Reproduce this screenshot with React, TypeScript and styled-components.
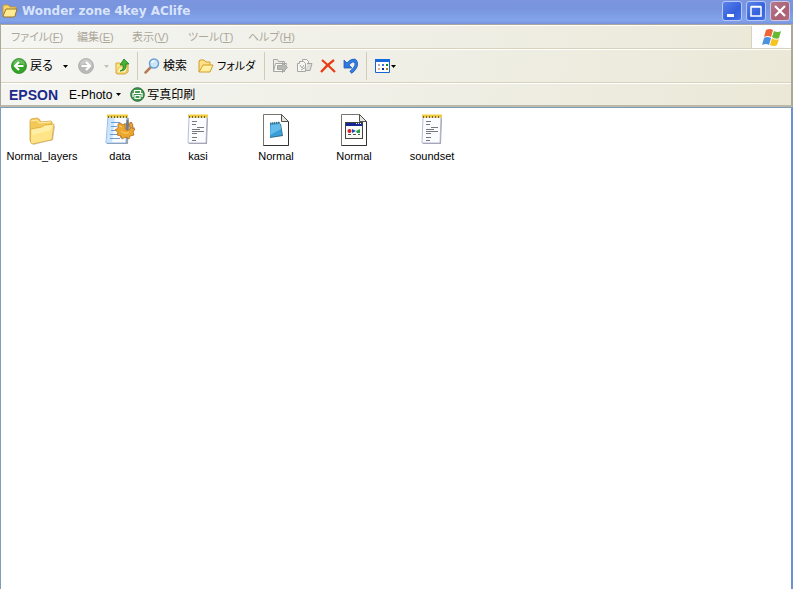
import React from 'react';
import styled, { createGlobalStyle } from 'styled-components';

const GlobalStyle = createGlobalStyle`
  * { box-sizing: border-box; }
  html, body, #root { height: 100%; margin: 0; }
  body {
    background: #fff;
    color: #000;
    font: 11px/16px "Liberation Sans", "Noto Sans CJK JP", sans-serif;
    font-feature-settings: "palt";
    overflow: hidden;
  }
  button { font: inherit; font-feature-settings: inherit; color: inherit; background: none; border: 0; padding: 0; white-space: nowrap; }
  svg { display: block; flex: none; }
`;

const Window = styled.main`
  display: flex;
  flex-direction: column;
  min-height: 100%;
`;

const TitleBar = styled.header`
  display: flex;
  align-items: center;
  gap: 4px;
  height: 24px;
  padding: 0 3px 0 2px;
  color: #d9e4fb;
  background: linear-gradient(#7b96de 0, #7894de 35%, #7d9ce4 60%, #82a4e9 85%, #7a91dc 100%);
`;

const TitleIcon = styled.span`
  padding-bottom: 3px;
`;

const Title = styled.h1`
  flex: 1;
  margin: 0;
  font: bold 12px/16px "DejaVu Sans", sans-serif;
  padding-bottom: 2px;
  white-space: nowrap;
`;

const Captions = styled.div`
  display: flex;
  gap: 4px;
  padding-bottom: 3px;
`;

const CaptionButton = styled.button<{ $close?: boolean }>`
  display: grid;
  place-items: center;
  width: 20px;
  height: 20px;
  border: 1px solid ${p => (p.$close ? '#d3c6e0' : '#b6c8f6')};
  border-radius: 3px;
  background: ${p => (p.$close
    ? 'linear-gradient(135deg, #b6798e, #aa6174 60%, #b26a80)'
    : 'linear-gradient(135deg, #5a82e8, #3561dd 60%, #4473e9)')};
`;

const Bars = styled.div`
  border: solid #aca899;
  border-width: 1px 2px 2px 1px;
  border-bottom-color: #bdb9a8;
  background: linear-gradient(100deg, #f5f5f2, #f0f0e8 45%, #ebe8d7);
`;

const Bar = styled.div<{ $height: number }>`
  display: flex;
  align-items: center;
  height: ${p => p.$height}px;
  border-top: 1px solid #fff;
  border-bottom: 1px solid #d8d2bd;
  &:last-child { border-bottom: 0; }
`;

const MenuList = styled.nav`
  display: flex;
  flex: 1;
  gap: 16px;
  padding-left: 10px;
  color: #aca899;
`;

const MenuButton = styled.button<{ $width: number }>`
  width: ${p => p.$width}px;
  text-align: left;
`;

const Throbber = styled.div`
  display: grid;
  place-items: center;
  align-self: stretch;
  width: 40px;
  border-left: 1px solid #d8d2bd;
  background: #fff;
`;

const Group = styled.div<{ $width: number; $gap: number; $start: number }>`
  display: flex;
  align-items: center;
  gap: ${p => p.$gap}px;
  width: ${p => p.$width}px;
  height: 28px;
  padding-left: ${p => p.$start}px;
  border-right: 1px solid #d0ccb9;
  &:last-child { border-right: 0; }
`;

const Tool = styled.button<{ $gap?: number; $large?: boolean }>`
  display: flex;
  align-items: center;
  gap: ${p => p.$gap ?? 3}px;
  font-size: ${p => (p.$large ? 12 : 11)}px;
`;

const LinkBar = styled.div`
  display: flex;
  align-items: center;
  gap: 8px;
  padding-left: 8px;
`;

const Brand = styled.strong`
  width: 52px;
  color: #1b2a8c;
  font: bold 14px/18px "Liberation Sans", sans-serif;
`;

const Content = styled.section`
  flex: 1;
  border: solid #7f9db9;
  border-width: 1px 1px 0;
  border-right: 2px solid #6f8fd3;
  background: #fff;
`;

const FileGrid = styled.ul`
  display: grid;
  grid-template-columns: repeat(auto-fill, 78px);
  gap: 16px 0;
  margin: 0;
  padding: 6px 2px;
  list-style: none;
`;

const FileButton = styled.button`
  display: flex;
  flex-direction: column;
  align-items: center;
  gap: 2px;
  width: 100%;
`;

const FolderIcon = () => (
  <svg width="32" height="32" viewBox="0 0 32 32">
    <path d="M6 12L29 12l-2 14L7 31z" fill="#8c8471" opacity=".45" />
    <path d="M4 27V7l1-2 6-1 2 1 2 3 10-1 1 1v18z" fill="#f3c856" stroke="#d3a443" strokeWidth=".8" />
    <path d="M5 7l6-1 2 3 12-1" fill="none" stroke="#fff2ae" />
    <path d="M4.500 28V15l11-2 3-2 9.500-1-2 15-1 1-19 4z" fill="#ffe588" stroke="#d9ab43" strokeWidth=".8" />
    <path d="M6 16l10-2 3-2 7-1-1 5L6 21z" fill="#fff5bb" opacity=".6" />
  </svg>
);

const OpenFolder = () => (
  <svg width="16" height="16" viewBox="0 0 16 16">
    <path d="M1 14V3l1-1h4l2 2h4v3" fill="#ffe18a" stroke="#d49c26" />
    <path d="M1 14L5 7h10l-3 7z" fill="#fff0a4" stroke="#d49c26" />
  </svg>
);

const TitleFolder = () => (
  <svg width="16" height="16" viewBox="0 0 16 16">
    <path d="M1 13V3l1-1h4l2 2h6v4" fill="#f8d66a" stroke="#c59a37" />
    <path d="M1 13L4 6h11l-2 7-1 1H2z" fill="#ffeb91" stroke="#96752c" />
  </svg>
);

const Arrow = ({ faded = false }) => (
  <svg width="7" height="5" viewBox="0 0 7 5"><path d="M1 1h5L3.500 4z" fill={faded ? '#c3c0b5' : '#000'} /></svg>
);

const RoundArrow = ({ forward = false }) => (
  <svg width="16" height="16" viewBox="0 0 16 16">
    <circle cx="8" cy="8" r="7.500" fill={forward ? '#b9b9b7' : '#35a328'} stroke={forward ? '#aaa' : '#2d8c25'} strokeWidth=".8" />
    <path d="M2 7a6 6 0 0112 0Q8 4 2 7z" fill="#fff" opacity=".25" />
    <path d={forward ? 'M3.500 8h8M8 4l4 4-4 4' : 'M12.500 8h-8M8 4L4 8l4 4'} fill="none" stroke="#fff" strokeWidth="2.200" />
  </svg>
);

const UpFolder = () => (
  <svg width="16" height="17" viewBox="0 0 16 17">
    <path d="M1 15V5h4l1 1h7v8l-3 2H2z" fill="#ffe58a" stroke="#d8a637" />
    <path d="M1 15l3-6 9-1-2 7z" fill="#fff1aa" stroke="#e0b044" strokeWidth=".8" />
    <path d="M5 13q4-1 3-6H5l4-6 5 5h-3q1 7-6 7z" fill="#46b435" stroke="#197d1c" strokeWidth=".8" />
  </svg>
);

const SearchIcon = () => (
  <svg width="16" height="16" viewBox="0 0 16 16">
    <path d="M1.500 14.500L6.500 9.500" stroke="#b97c5a" strokeWidth="2.500" strokeLinecap="round" />
    <circle cx="10" cy="5.500" r="4.500" fill="#c8e7fb" stroke="#6a9ed6" strokeWidth="1.500" />
    <path d="M7.500 5q.5-2 3-2" stroke="#fff" strokeWidth="1.500" fill="none" />
  </svg>
);

const MoveIcon = ({ copy = false }) => (
  <svg width="17" height="16" viewBox="0 0 17 16" stroke="#a6a6a2" fill="#ecece8">
    {copy ? (
      <>
        <path d="M6.500 1.500h4l2 2v8h-6z" fill="#f6f6f3" />
        <path d="M1.500 5.500h2v-2h4l2 2v8h-8z" fill="#f6f6f3" />
        <path d="M4 7l2 3 2-3M5 12l5-3" fill="none" />
        <path d="M11 5.500h5l-2 7h-4" fill="#dededa" />
      </>
    ) : (
      <>
        <path d="M1.500 13.500v-12h4l1 2h6v10z" />
        <path d="M3.500 5.500h11l-2 8h-11z" fill="#f6f6f3" />
        <path d="M5.500 7.500h5v-3l5 5-5 5v-3h-5z" fill="#b9b9b4" />
      </>
    )}
  </svg>
);

const DeleteIcon = () => (
  <svg width="16" height="16" viewBox="0 0 16 16">
    <path d="M2 2q6 5 13 12M14 2Q7 7 1 14" fill="none" stroke="#e93c15" strokeWidth="2.200" />
  </svg>
);

const UndoIcon = () => (
  <svg width="16" height="16" viewBox="0 0 16 16">
    <path d="M4 7Q8 2 11.500 2.500 14 4 13 8 12 11 7.500 14.500" fill="none" stroke="#1f5fbf" strokeWidth="3.400" />
    <path d="M1 2v8h8z" fill="#2f78d9" stroke="#1f5fbf" strokeWidth=".8" />
    <path d="M4 7Q8 2 11.500 2.500 14 4 13 8 12 11 8 14" fill="none" stroke="#3480e2" strokeWidth="2" />
  </svg>
);

const ViewIcon = () => (
  <svg width="15" height="14" viewBox="0 0 15 14">
    <path d="M.5.5h14v13H.5z" fill="#fff" stroke="#1765d2" />
    <path d="M0 0h15v3H0z" fill="#1668df" />
    <path d="M3 5h2v2H3z" fill="#aaa6cc" />
    <path d="M7 5h2v2H7z" fill="#3e72de" /><path d="M11 5h2v2h-2z" fill="#178626" />
    <path d="M3 9h2v2H3z" fill="#ecae7c" /><path d="M7 9h2v2H7z" fill="#10279b" /><path d="M11 9h2v2h-2z" fill="#b47d18" />
  </svg>
);

const PrintIcon = () => (
  <svg width="15" height="15" viewBox="0 0 15 15">
    <circle cx="7.500" cy="7.500" r="6.800" fill="#43974f" stroke="#236c34" />
    <path d="M4.500 6V3.500h6V6M3 10V6.500h9V10M5 8.500h5v3H5z" fill="none" stroke="#fff" strokeWidth="1.200" />
  </svg>
);

const FlagIcon = () => (
  <svg width="20" height="19" viewBox="0 0 20 19">
    <path d="M4 2q4-2 7 0L9 9Q6 7 2 9z" fill="#ed6437" />
    <path d="M12 3q4 2 7 0l-2 7q-3 2-7-1z" fill="#67b832" />
    <path d="M2 10q3-2 7 0l-2 7q-3-2-7 0z" fill="#4b91de" />
    <path d="M10 10q3 3 7 1l-2 6q-3 2-7 0z" fill="#f6c322" />
  </svg>
);

const NoteIcon = ({ gear = false }) => (
  <svg width="32" height="32" viewBox="0 0 32 32">
    <path d={gear ? 'M4 4h21l-1 26H3z' : 'M8 4h18l-1 26H7z'} fill="#85858c" opacity=".75" />
    <path d={gear ? 'M4 3h19l-1 26H2z' : 'M7 3h18l-1 26H6z'} fill="#fafcff" stroke={gear ? '#69a3da' : '#aaaacb'} strokeWidth=".8" />
    {gear && <path d="M4 4L2 29h6l3-25z" fill="#b9dcfb" opacity=".7" />}
    <path d={gear ? 'M3 2h21' : 'M6 2h20'} stroke="#f0cb3c" strokeWidth="3" />
    <path d={gear ? 'M4 3h20' : 'M7 3h18'} stroke="#6e653f" strokeWidth="2" strokeDasharray="1 2" />
    {gear ? (
      <>
        <path d="M7 8.500h9M7 12.500h6M7 16.500h8M6 20.500h12M6 24.500h10" stroke="#6a9bd4" />
        <path d="M15 10l3 1 3-2 7-1 1 4 2 2-2 3 1 4-4 1-2 3-4-2-4 1v-4l-2-3 2-3z" fill="#59462d" opacity=".45" />
        <path d="M14 10l3-1 1 2 3-1v5q3 3 6-1l-2-3 2-3 2 3-1 3 3 1-2 3 1 3-4 1-1 3-3-2-4 2-1-3-4-1 1-3-3-2 3-2z" fill="#eaa62f" stroke="#b8741f" strokeWidth=".8" />
        <path d="M23.500 6v7" stroke="#77777a" strokeWidth="2" />
        <path d="M15 12l3 1M17 17q4 4 8 1" fill="none" stroke="#ffd25f" />
      </>
    ) : <path d="M10 7.500h5M10 10.500h4M15 13.500h7M10 15.500h8M10 17.500h12M10 19.500h5M10 23.500h5M10 26.500h4" stroke="#77777c" />}
  </svg>
);

const PageIcon = ({ app = false }) => (
  <svg width="32" height="32" viewBox="0 0 32 32">
    <path d="M3.500.5h18l7 7v24h-25z" fill="#fff" stroke="#77776f" />
    <path d="M28.500 8v23.500h-25" fill="none" stroke="#333" />
    <path d="M21.500.5v7h7z" fill="#e5e5dd" stroke="#51514b" />
    {app ? (
      <>
        <path d="M7 8h18v17H7z" fill="#444" /><path d="M8 9h16v3H8z" fill="#152691" />
        <path d="M8 12h16v12H8z" fill="#fbfbf5" />
        <path d="M18 9h1v1h-1zM20 9h1v1h-1zM22 9h1v1h-1z" fill="#fff" />
        <circle cx="11.500" cy="17" r="2" fill="#d6202c" /><path d="M14 15l4 2-4 2z" fill="#2446bb" /><path d="M18 17l4-2v4h-3z" fill="#24a24b" />
        <path d="M10 20.500h3M15 20.500h3M20 20.500h2" stroke="#555" />
      </>
    ) : (
      <>
        <path d="M11 10h10l2 12-13 2z" fill="#34708d" />
        <path d="M10 9l10-1 2 13-12 2z" fill="#389ed9" />
        <path d="M11 11l9-1 1 5-11 6z" fill="#83d1f4" opacity=".6" />
        <path d="M10 9.500l10-1" stroke="#586a64" strokeWidth="2" strokeDasharray="1 1" />
      </>
    )}
  </svg>
);

const menus = [
  { label: 'ファイル', accel: 'F', width: 50 },
  { label: '編集', accel: 'E', width: 39 },
  { label: '表示', accel: 'V', width: 40 },
  { label: 'ツール', accel: 'T', width: 44 },
  { label: 'ヘルプ', accel: 'H', width: 46 },
];

const files = [
  { name: 'Normal_layers', icon: <FolderIcon /> },
  { name: 'data', icon: <NoteIcon gear /> },
  { name: 'kasi', icon: <NoteIcon /> },
  { name: 'Normal', icon: <PageIcon /> },
  { name: 'Normal', icon: <PageIcon app /> },
  { name: 'soundset', icon: <NoteIcon /> },
];

export default function App() {
  return (
    <Window>
      <GlobalStyle />
      <TitleBar>
        <TitleIcon><TitleFolder /></TitleIcon>
        <Title>Wonder zone 4key AClife</Title>
        <Captions>
          <CaptionButton aria-label="Minimize">
            <svg width="12" height="12"><path d="M1 9h7v3H1z" fill="#fff" /></svg>
          </CaptionButton>
          <CaptionButton aria-label="Maximize">
            <svg width="12" height="12"><path d="M1 2h10v9H1zM1 1.500h10" fill="none" stroke="#fff" strokeWidth="1.500" /></svg>
          </CaptionButton>
          <CaptionButton $close aria-label="Close">
            <svg width="12" height="12"><path d="M1 1l10 10M11 1L1 11" stroke="#fff" strokeWidth="2.200" /></svg>
          </CaptionButton>
        </Captions>
      </TitleBar>
      <Bars>
        <Bar $height={24}>
          <MenuList>
            {menus.map(m => (
              <MenuButton key={m.accel} $width={m.width}>{m.label}(<u>{m.accel}</u>)</MenuButton>
            ))}
          </MenuList>
          <Throbber><FlagIcon /></Throbber>
        </Bar>
        <Bar $height={34}>
          <Group $width={137} $gap={9} $start={10}>
            <Tool $large><RoundArrow />戻る</Tool>
            <Tool aria-label="戻る履歴"><Arrow /></Tool>
            <Tool aria-label="進む"><RoundArrow forward /></Tool>
            <Tool $gap={5} aria-label="上へ"><Arrow faded /><UpFolder /></Tool>
          </Group>
          <Group $width={127} $gap={11} $start={6}>
            <Tool $large><SearchIcon />検索</Tool>
            <Tool><OpenFolder />フォルダ</Tool>
          </Group>
          <Group $width={102} $gap={7} $start={7}>
            <Tool aria-label="移動"><MoveIcon /></Tool>
            <Tool aria-label="コピー"><MoveIcon copy /></Tool>
            <Tool aria-label="削除"><DeleteIcon /></Tool>
            <Tool aria-label="元に戻す"><UndoIcon /></Tool>
          </Group>
          <Group $width={40} $gap={0} $start={8}>
            <Tool $gap={0} aria-label="表示"><ViewIcon /><Arrow /></Tool>
          </Group>
        </Bar>
        <Bar $height={22}>
          <LinkBar>
            <Brand>EPSON</Brand>
            <Tool $large>E-Photo<Arrow /></Tool>
            <Tool $large $gap={2}><PrintIcon />写真印刷</Tool>
          </LinkBar>
        </Bar>
      </Bars>
      <Content>
        <FileGrid>
          {files.map((f, i) => (
            <li key={i}><FileButton>{f.icon}{f.name}</FileButton></li>
          ))}
        </FileGrid>
      </Content>
    </Window>
  );
}
